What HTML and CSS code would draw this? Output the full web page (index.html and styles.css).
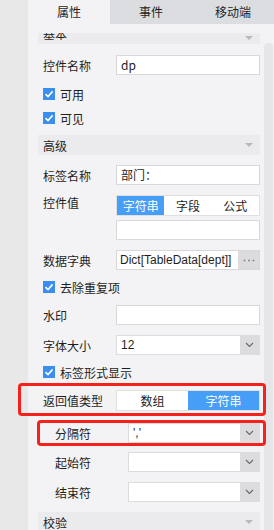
FILE: index.html
```html
<!DOCTYPE html>
<html lang="zh">
<head>
    <meta charset="UTF-8">
    <meta name="viewport" content="width=device-width, initial-scale=1.0">
    <title>属性面板</title>
    <link rel="stylesheet" href="styles.css">
</head>
<body>
    <div class="app">
        <div class="rail"></div>
        <div class="main">
            <div class="topline"></div>
            <div class="tabs">
                <div class="tab active">属性</div>
                <div class="tab">事件</div>
                <div class="tab">移动端</div>
            </div>
            <div class="body">
                <div class="panel">
                    <div class="group cut"><span class="group-title">基本</span><i class="tri"></i></div>

                    <div class="row first">
                        <div class="label">控件名称</div>
                        <div class="field">dp</div>
                    </div>
                    <div class="check first"><span class="box"><svg width="10" height="10" viewBox="0 0 10 10"><path d="M1.5 5.2 L4 7.6 L8.6 2.4" fill="none" stroke="#fff" stroke-width="1.6"/></svg></span>可用</div>
                    <div class="check last"><span class="box"><svg width="10" height="10" viewBox="0 0 10 10"><path d="M1.5 5.2 L4 7.6 L8.6 2.4" fill="none" stroke="#fff" stroke-width="1.6"/></svg></span>可见</div>

                    <div class="group"><span class="group-title">高级</span><i class="tri"></i></div>

                    <div class="row">
                        <div class="label">标签名称</div>
                        <div class="field">部门：</div>
                    </div>
                    <div class="row top">
                        <div class="label">控件值</div>
                        <div class="stack">
                            <div class="seg">
                                <span class="on">字符串</span>
                                <span>字段</span>
                                <span>公式</span>
                            </div>
                            <div class="field"></div>
                        </div>
                    </div>
                    <div class="row tight">
                        <div class="label">数据字典</div>
                        <div class="field dict">
                            <span class="val latin">Dict[TableData[dept]]</span>
                            <span class="more"><svg width="12" height="3" viewBox="0 0 12 3"><circle cx="1.5" cy="1.5" r="1" fill="#8a8a8c"/><circle cx="6" cy="1.5" r="1" fill="#8a8a8c"/><circle cx="10.5" cy="1.5" r="1" fill="#8a8a8c"/></svg></span>
                        </div>
                    </div>
                    <div class="check"><span class="box"><svg width="10" height="10" viewBox="0 0 10 10"><path d="M1.5 5.2 L4 7.6 L8.6 2.4" fill="none" stroke="#fff" stroke-width="1.6"/></svg></span>去除重复项</div>

                    <div class="row after-check">
                        <div class="label">水印</div>
                        <div class="field"></div>
                    </div>
                    <div class="row tight">
                        <div class="label">字体大小</div>
                        <div class="select">
                            <span class="val latin">12</span>
                            <span class="arrow"><svg width="9" height="6" viewBox="0 0 9 6"><path d="M1 1 L4.5 4.5 L8 1" fill="none" stroke="#666" stroke-width="1.1"/></svg></span>
                        </div>
                    </div>
                    <div class="check"><span class="box"><svg width="10" height="10" viewBox="0 0 10 10"><path d="M1.5 5.2 L4 7.6 L8.6 2.4" fill="none" stroke="#fff" stroke-width="1.6"/></svg></span>标签形式显示</div>

                    <div class="row mark mark-type">
                        <div class="label">返回值类型</div>
                        <div class="seg">
                            <span>数组</span>
                            <span class="on">字符串</span>
                        </div>
                    </div>
                    <div class="row sub mark mark-sep">
                        <div class="label">分隔符</div>
                        <div class="select">
                            <span class="val latin">','</span>
                            <span class="arrow"><svg width="9" height="6" viewBox="0 0 9 6"><path d="M1 1 L4.5 4.5 L8 1" fill="none" stroke="#666" stroke-width="1.1"/></svg></span>
                        </div>
                    </div>
                    <div class="row sub">
                        <div class="label">起始符</div>
                        <div class="select">
                            <span class="val"></span>
                            <span class="arrow"><svg width="9" height="6" viewBox="0 0 9 6"><path d="M1 1 L4.5 4.5 L8 1" fill="none" stroke="#666" stroke-width="1.1"/></svg></span>
                        </div>
                    </div>
                    <div class="row sub">
                        <div class="label">结束符</div>
                        <div class="select">
                            <span class="val"></span>
                            <span class="arrow"><svg width="9" height="6" viewBox="0 0 9 6"><path d="M1 1 L4.5 4.5 L8 1" fill="none" stroke="#666" stroke-width="1.1"/></svg></span>
                        </div>
                    </div>

                    <div class="group"><span class="group-title">校验</span><i class="tri"></i></div>
                </div>
                <div class="scrollbar"><div class="thumb"></div></div>
            </div>
        </div>
    </div>
</body>
</html>
```

FILE: styles.css
```css
body {
    margin: 0;
    width: 274px;
    height: 530px;
    overflow: hidden;
    font-family: "Noto Sans CJK SC", "Liberation Sans", sans-serif;
    font-size: 12px;
    color: #1e1e1e;
    background: #f3f3f5;
}
.app {
    display: flex;
    height: 530px;
}
.rail {
    width: 28px;
    flex: none;
    background: #e8e8e8;
}
.main {
    flex: 1;
    display: flex;
    flex-direction: column;
    min-width: 0;
}
.topline {
    height: 4px;
    background: #f8f8f8;
}
.tabs {
    display: flex;
    height: 24px;
    background: #dcdde0;
}
.tab {
    flex: 1;
    text-align: center;
    line-height: 24px;
    font-size: 12px;
}
.tab.active {
    background: #f3f3f5;
}
.body {
    flex: 1;
    display: flex;
}
.panel {
    width: 236px;
    flex: none;
    box-sizing: border-box;
    padding: 9px 4px 0 10px;
}
.scrollbar {
    flex: 1;
    padding-top: 19px;
}
.thumb {
    width: 9px;
    height: 600px;
    background: #e6e6e8;
    border-radius: 4px 4px 0 0;
}

/* group headers */
.group {
    height: 20px;
    background: #ebebed;
    display: flex;
    align-items: center;
    justify-content: space-between;
    padding: 0 7px 0 5px;
    margin-bottom: 10px;
}
.group.cut {
    height: 11px;
    overflow: hidden;
    align-items: flex-start;
    margin-bottom: 11px;
}
.group.cut .group-title {
    margin-top: -9px;
    line-height: 20px;
}
.group.cut .tri {
    margin-top: 3px;
}
.tri {
    width: 0;
    height: 0;
    border-left: 4px solid transparent;
    border-right: 4px solid transparent;
    border-top: 4px solid #b9b9bb;
}

/* rows */
.row {
    display: flex;
    align-items: center;
    height: 20px;
    margin-bottom: 10px;
    position: relative;
}
.row.first {
    margin-bottom: 7px;
}
.row.tight {
    margin-bottom: 5px;
}
.row.after-check {
    margin-top: 6px;
}
.row.top {
    height: auto;
    align-items: flex-start;
}
.label {
    width: 78px;
    flex: none;
    box-sizing: border-box;
    padding-left: 5px;
}
.row.top .label {
    line-height: 16px;
}
.row.sub .label {
    width: 90px;
    padding-left: 17px;
}
.stack {
    flex: 1;
    display: flex;
    flex-direction: column;
    gap: 4px;
}
.field {
    flex: 1;
    min-width: 0;
    height: 20px;
    box-sizing: border-box;
    background: #fff;
    border: 1px solid #d8d8da;
    padding-left: 4px;
    line-height: 18px;
}
.stack .field {
    flex: none;
}
.latin {
    font-family: "Liberation Sans", sans-serif;
}
.dict {
    display: flex;
    padding-left: 3px;
}
.dict .val {
    flex: 1;
    min-width: 0;
    white-space: nowrap;
    overflow: hidden;
}
.more {
    width: 21px;
    flex: none;
    background: #dcdcdf;
    display: flex;
    align-items: center;
    justify-content: center;
}

/* segmented */
.seg {
    flex: 1;
    display: flex;
    height: 21px;
    box-sizing: border-box;
    background: #fff;
    border: 1px solid #e0e0e2;
}
.seg span {
    flex: 1;
    text-align: center;
    line-height: 19px;
}
.seg .on {
    background: #479ef6;
    color: #fff;
}

/* select */
.select {
    flex: 1;
    display: flex;
    height: 20px;
    box-sizing: border-box;
    background: #fff;
    border: 1px solid #dcdcde;
}
.select .val {
    flex: 1;
    padding-left: 4px;
    line-height: 18px;
}
.arrow {
    width: 19px;
    background: #dcdcdf;
    display: flex;
    align-items: center;
    justify-content: center;
}

/* checkboxes */
.check {
    display: flex;
    align-items: center;
    height: 24px;
    padding-left: 5px;
}
.check.last {
    margin-bottom: 5px;
}
.box {
    width: 12px;
    height: 12px;
    margin-right: 5px;
    background: #3a8ef0;
    display: flex;
    align-items: center;
    justify-content: center;
}

/* red annotation boxes */
.mark-type {
    height: 21px;
    margin-top: 6px;
    margin-bottom: 12px;
}
.mark-sep {
    margin-bottom: 9px;
}
.mark::before {
    content: '';
    position: absolute;
    border: 3px solid #f4211d;
    border-radius: 4px;
    pointer-events: none;
}
.mark-type::before {
    top: -7px;
    bottom: -5px;
    left: -20px;
    right: -6px;
}
.mark-sep::before {
    top: -3px;
    bottom: -3px;
    left: -1px;
    right: -6px;
}
```
